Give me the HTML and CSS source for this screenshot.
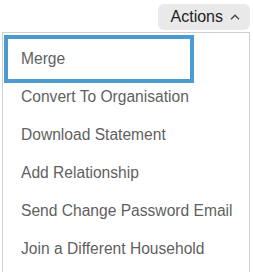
FILE: index.html
```html
<!DOCTYPE html>
<html lang="en">

<head>
    <meta charset="UTF-8" />
    <title>Actions</title>
    <link rel="stylesheet" href="styles.css">
</head>

<body>

    <div class="dropdown">
        <div class="toolbar">
            <button class="toggle">
                Actions
                <svg class="chevron" width="10" height="6" viewBox="0 0 10 6">
                    <path d="M1 5.2 L5 1.2 L9 5.2" fill="none" stroke="#444" stroke-width="1.3" />
                </svg>
            </button>
        </div>
        <div class="menu">
            <div class="item focused">Merge</div>
            <div class="item">Convert To Organisation</div>
            <div class="item">Download Statement</div>
            <div class="item">Add Relationship</div>
            <div class="item">Send Change Password Email</div>
            <div class="item">Join a Different Household</div>
        </div>
    </div>

</body>

</html>
```

FILE: styles.css
```css
body {
    margin: 0;
    background: #ffffff;
    font-family: 'Liberation Sans', Arial, sans-serif;
    overflow: hidden;
    height: 273px;
}

.dropdown {
    padding: 4px 3px 0 2px;
}

.toolbar {
    display: flex;
    justify-content: flex-end;
    height: 28px;
}

.toggle {
    display: flex;
    align-items: center;
    gap: 7px;
    height: 26px;
    padding: 0 10px 0 13px;
    border: none;
    border-radius: 6px;
    background-color: #e9e9e9;
    color: #222;
    font-family: inherit;
    font-size: 16px;
}

.menu {
    border: 1px solid #cfcfcf;
    border-bottom: none;
    padding-top: 7px;
    height: 232px;
}

.item {
    height: 38px;
    line-height: 38px;
    margin: 0 6px;
    padding-left: 12px;
    font-size: 15.6px;
    color: #5f5f5f;
}

.focused {
    width: 180px;
    box-sizing: border-box;
    outline: 4px solid #4a9bd0;
    outline-offset: 1px;
}
```
